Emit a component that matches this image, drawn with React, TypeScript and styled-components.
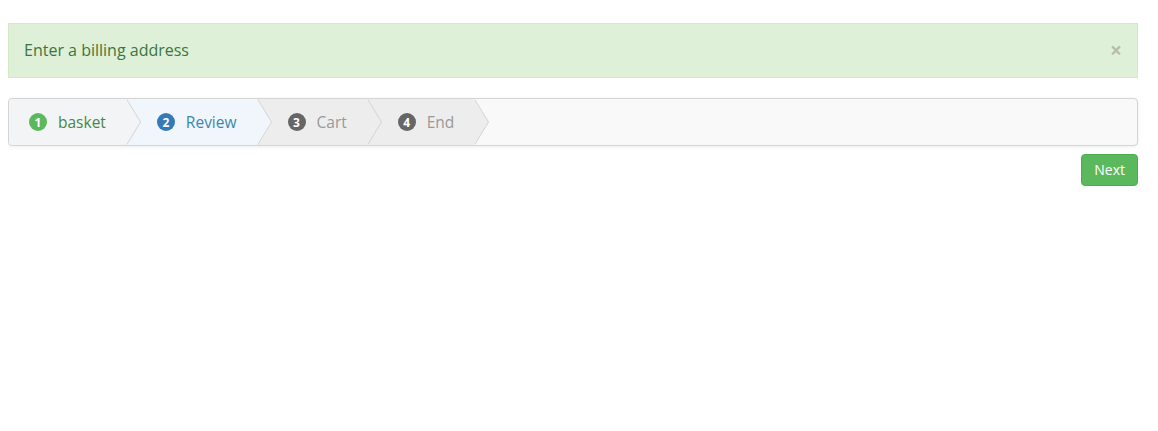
import styled, { createGlobalStyle } from "styled-components";

const steps = [
  { n: 1, label: "basket", state: "complete" },
  { n: 2, label: "Review", state: "active" },
  { n: 3, label: "Cart", state: "todo" },
  { n: 4, label: "End", state: "todo" },
] as const;

type StepState = (typeof steps)[number]["state"];

const colors = {
  complete: { bg: "#f3f4f5", text: "#468847", badge: "#5cb85c" },
  active: { bg: "#f1f6fc", text: "#3a87ad", badge: "#337ab7" },
  todo: { bg: "#ededed", text: "#999999", badge: "#666666" },
};

export default function App() {
  return <>
    <GlobalStyle/>
    <Page>
      <Alert>
        Enter a billing address
        <Close aria-label="close">×</Close>
      </Alert>

      <Wizard>
        <Steps>
          {steps.map(s => (
            <Step key={s.n} $state={s.state}>
              <Badge $state={s.state}>{s.n}</Badge>
              {s.label}
            </Step>
          ))}
        </Steps>
      </Wizard>

      <Actions>
        <NextButton>Next</NextButton>
      </Actions>
    </Page>
  </>
}

const GlobalStyle = createGlobalStyle`
  body {
    margin: 8px;
    font-family: "Open Sans", "Liberation Sans", sans-serif;
    background: #fff;
  }
`

const Page = styled.div`
  padding: 15px 12px 0 0;
  display: flex;
  flex-direction: column;
`

const Alert = styled.div`
  display: flex;
  align-items: center;
  justify-content: space-between;
  padding: 15px;
  margin-bottom: 20px;
  font-size: 16px;
  line-height: 23px;
  color: #3c763d;
  background: #dff0d8;
  border: 1px solid #d6e9c6;
`

const Close = styled.span`
  font-size: 21px;
  font-weight: bold;
  line-height: 1;
  color: #000;
  opacity: 0.2;
  text-shadow: 0 1px 0 #fff;
  cursor: pointer;
`

const Wizard = styled.div`
  height: 46px;
  border: 1px solid #d4d4d4;
  border-radius: 4px;
  background: #f9f9f9;
  box-shadow: 0 1px 4px rgba(0, 0, 0, 0.065);
  overflow: hidden;
`

const Steps = styled.ul`
  display: flex;
  list-style: none;
  margin: 0;
  padding: 0;
  height: 100%;
`

const Step = styled.li<{ $state: StepState }>`
  position: relative;
  display: flex;
  align-items: center;
  gap: 11px;
  height: 46px;
  padding: 0 20px 0 31px;
  font-size: 15.5px;
  color: ${({$state}) => colors[$state].text};
  background: ${({$state}) => colors[$state].bg};

  &:first-child {
    padding-left: 20px;
    border-radius: 4px 0 0 4px;
  }

  &::before, &::after {
    content: "";
    position: absolute;
    top: 0;
    border-style: solid;
    border-color: transparent;
    border-width: 23px 0 23px 14px;
    z-index: 1;
  }

  &::before {
    right: -15px;
    border-left-color: #d4d4d4;
  }

  &::after {
    right: -14px;
    border-left-color: ${({$state}) => colors[$state].bg};
    z-index: 2;
  }
`

const Badge = styled.span<{ $state: StepState }>`
  display: inline-flex;
  align-items: center;
  justify-content: center;
  width: 18px;
  height: 18px;
  border-radius: 9px;
  font-size: 12px;
  font-weight: bold;
  color: #fff;
  background: ${({$state}) => colors[$state].badge};
`

const Actions = styled.div`
  display: flex;
  justify-content: flex-end;
  margin-top: 8px;
`

const NextButton = styled.button`
  font-family: inherit;
  font-size: 14px;
  line-height: 20px;
  padding: 5px 12px;
  color: #fff;
  background: #5cb85c;
  border: 1px solid #4cae4c;
  border-radius: 4px;
  cursor: pointer;
`
